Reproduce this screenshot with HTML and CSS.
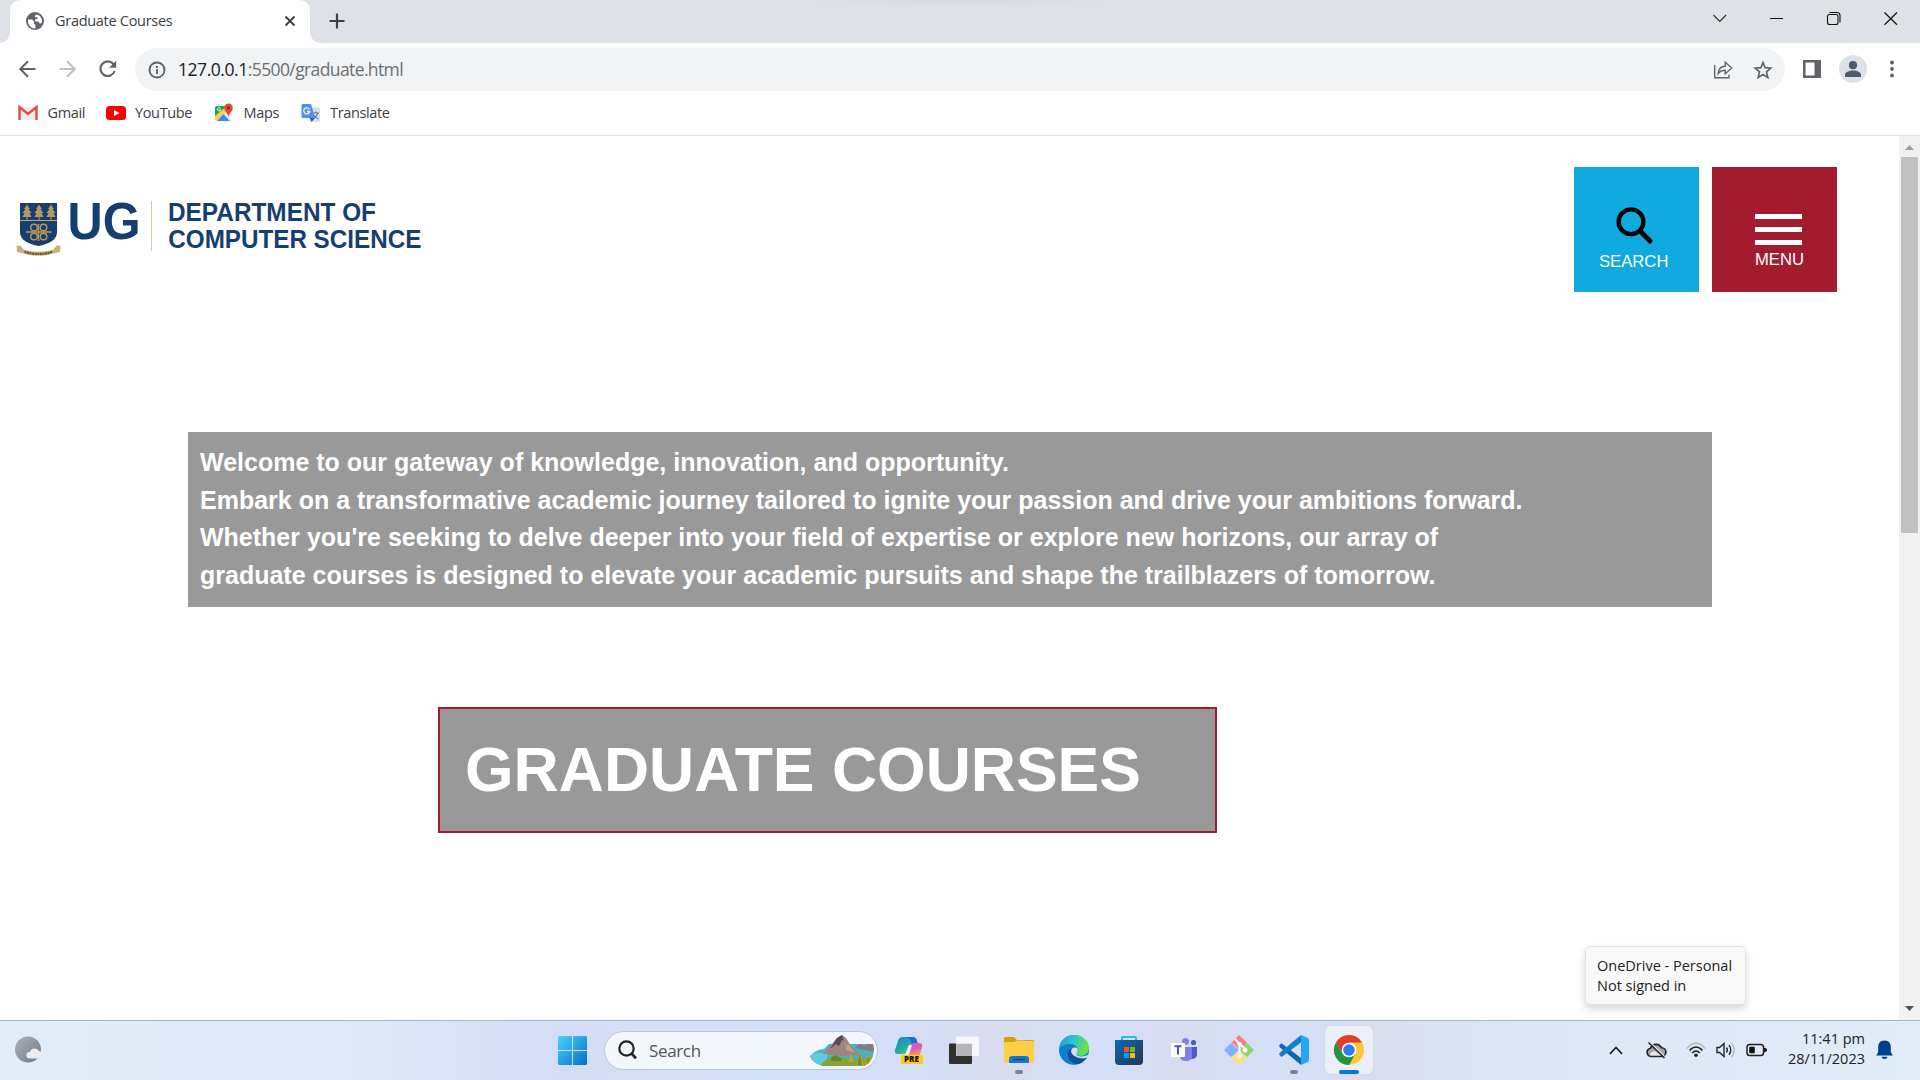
FILE: index.html
```html
<!DOCTYPE html>
<html lang="en">
<head>
<meta charset="utf-8">
<title>Graduate Courses</title>
<link rel="stylesheet" href="styles.css">
</head>
<body>
<div class="tabstrip">
  <div class="tab">
    <svg class="favicon" width="18" height="18" viewBox="0 0 18 18"><circle cx="9" cy="9" r="9" fill="#5f6368"/><path d="M2 7.5h4.2l2 2.2-.4 1.8 1.6 1.4v3.6C5 16.500 2 13 2 9zM9 3.200l2.300-.7C14 3.500 16 6 16 9l-.5 2.200-1.900.3-1.200-2-3.400-.2V7.600l2.400-.6.3-1.700H9z" fill="#fff"/></svg>
    <span class="tab-title">Graduate Courses</span>
    <svg class="tab-close" width="12" height="12" viewBox="0 0 12 12"><path d="M1.500 1.500l9 9m0-9l-9 9" stroke="#3c4043" stroke-width="1.900"/></svg>
  </div>
  <svg class="new-tab" width="16" height="16" viewBox="0 0 16 16"><path d="M8 .5v15M.5 8h15" stroke="#3c4043" stroke-width="2.200"/></svg>
  <div class="window-buttons">
    <svg width="57" height="36" viewBox="0 0 57 36"><path d="M22.500 15l6.300 6.500 6.300-6.500" fill="none" stroke="#333" stroke-width="1.200"/></svg>
    <svg width="57" height="36" viewBox="0 0 57 36"><path d="M22 18.500h13" stroke="#111"/></svg>
    <svg width="57" height="36" viewBox="0 0 57 36"><rect x="22.500" y="14.500" width="10.500" height="10" rx="2" fill="none" stroke="#111" stroke-width="1.100"/><path d="M24.500 12.500H32q3 0 3 3V22.500" fill="none" stroke="#111" stroke-width="1.100"/></svg>
    <svg width="57" height="36" viewBox="0 0 57 36"><path d="M22.500 12.500l12.500 12.300m0-12.300L22.500 24.800" stroke="#111" stroke-width="1.200"/></svg>
  </div>
</div>
<div class="toolbar">
  <svg width="40" height="40" viewBox="0 0 40 40"><path d="M28.500 20H13.500M21 12.300L13.300 20l7.700 7.700" fill="none" stroke="#5f6368" stroke-width="2"/></svg>
  <svg width="40" height="40" viewBox="0 0 40 40"><path d="M12.500 20h15M20 12.300l7.700 7.700-7.700 7.700" fill="none" stroke="#bdc0c4" stroke-width="2"/></svg>
  <svg width="40" height="40" viewBox="0 0 40 40"><path d="M26.800 15.600A7.300 7.300 0 1 0 27.700 22" fill="none" stroke="#5f6368" stroke-width="2.100"/><path d="M29.200 11.700v7h-7z" fill="#5f6368"/></svg>
  <div class="omnibox">
    <svg width="18" height="18" viewBox="0 0 18 18"><circle cx="9" cy="9" r="7.500" fill="none" stroke="#5f6368" stroke-width="1.900"/><path d="M9 8v5M9 5v1.900" stroke="#5f6368" stroke-width="1.900"/></svg>
    <span class="url"><b>127.0.0.1</b>:5500/graduate.html</span>
    <svg class="share" width="20" height="20" viewBox="0 0 20 20" fill="none" stroke="#5f6368" stroke-width="1.400"><path d="M1.700 5v12.800h14.300v-3"/><path d="M5.200 13.500c.3-4.300 3-7.200 7-7.300V2.300L18.700 8l-6.500 5.700v-3.500c-3.200-.1-5.200.9-7 3.300z"/></svg>
    <svg class="star" width="20" height="20" viewBox="0 0 20 20"><path d="M10 2.500l2.100 5.200 5.700.5-4.300 3.700 1.300 5.500L10 14.500l-4.800 2.900 1.300-5.500-4.300-3.700 5.700-.5z" fill="none" stroke="#5f6368" stroke-width="1.700"/></svg>
  </div>
  <svg class="panel" width="18" height="18" viewBox="0 0 18 18"><path fill-rule="evenodd" d="M0 0h18v18H0zM2.500 2.500v13H11.500v-13z" fill="#5f6368"/></svg>
  <svg class="avatar" width="28" height="28" viewBox="0 0 28 28"><circle cx="14" cy="14" r="14" fill="#dee1e6"/><circle cx="14" cy="10.200" r="4.100" fill="#4d5b70"/><path d="M6 22v-2c0-3 4-4.500 8-4.500s8 1.500 8 4.500v2z" fill="#4d5b70"/></svg>
  <svg class="dots" width="6" height="18" viewBox="0 0 6 18" fill="#5f6368"><circle cx="3" cy="2.500" r="1.900"/><circle cx="3" cy="9" r="1.900"/><circle cx="3" cy="15.500" r="1.900"/></svg>
</div>
<div class="bookmarks">
  <svg width="20" height="20" viewBox="0 0 20 20"><path d="M3 4h14v13H3z" fill="#eee"/><path d="M1.500 17V4L10 11l8.500-7v13" fill="none" stroke="#dd4b3e" stroke-width="2.400"/></svg>
  <span class="bm-gmail">Gmail</span>
  <svg width="20" height="20" viewBox="0 0 20 20"><rect y="3" width="20" height="14" rx="3.500" fill="#f00"/><path d="M8 7l5.500 3L8 13z" fill="#fff"/></svg>
  <span class="bm-youtube">YouTube</span>
  <svg width="20" height="20" viewBox="0 0 20 20"><path d="M3 3h14v15H3q-2 0-2-2V5q0-2 2-2z" fill="#f1f1f1"/><path d="M3 3h10L1 14V5q0-2 2-2z" fill="#1e9e57"/><path d="M1 13L12 4l2 3L3 18q-2 0-2-2z" fill="#fcd24a"/><path d="M3 18l6.500-7L16 18z" fill="#4285f4"/><path d="M6.500 5.300a1.700 1.700 0 1 0 .3 1.500H5.300" fill="none" stroke="#fff" stroke-width=".9"/><path d="M14.500 14c-.5-4-4.300-5.500-4.300-9.300a4.300 4.300 0 0 1 8.600 0c0 3.800-3.800 5.300-4.300 9.300z" fill="#e04a3a"/><circle cx="14.500" cy="4.700" r="1.500" fill="#8c211a"/></svg>
  <span class="bm-maps">Maps</span>
  <svg width="20" height="20" viewBox="0 0 20 20"><rect x="8" y="4.500" width="11" height="14.500" rx="1.500" fill="#dcdfe2"/><path d="M12 10h6M15 8.500V10M17 10c-1 3-3 4.500-4.500 5.500M13 12c1 2 2 3.500 4.500 4" stroke="#68777d" stroke-width="1.100" fill="none"/><path d="M2 1h8l4 14H2q-1.500 0-1.500-1.500v-11Q.5 1 2 1z" fill="#4c8df6"/><path d="M9 15h5l-3.500 4z" fill="#2b56c5"/><path d="M8.300 6.300A3 3 0 1 0 8.700 8.500H6" fill="none" stroke="#fff" stroke-width="1.300"/></svg>
  <span class="bm-translate">Translate</span>
</div>
<div class="viewport">
  <main class="page">
    <header class="site-header">
      <svg class="logo" width="440" height="90" viewBox="0 180 440 90">
        <path d="M20 203h37v29c0 8-8 12-18.500 14C28 244 20 240 20 232z" fill="#173e70"/>
        <path d="M20 220.500h37" stroke="#c4a468" stroke-width="1"/>
        <g fill="#b9985a"><path id="tree" d="M27 204.500l3 4.500h-1.500l3 4h-2l2 4h-4v3h-1v-3h-4l2-4h-2l3-4H24z"/><use href="#tree" x="12"/><use href="#tree" x="24"/></g>
        <g fill="none" stroke="#b9985a" stroke-width="1.400"><path d="M26 232h25.500M38.500 224v17"/><circle cx="34" cy="227.500" r="3.300"/><circle cx="43.500" cy="227.500" r="3.300"/><circle cx="34" cy="236.500" r="3.300"/><circle cx="43.500" cy="236.500" r="3.300"/></g>
        <path d="M16.500 246l4-.5 3 4c9 3 21 3 30 0l3-4 4 .5-.5 6-7 1.500c-8 3-21 3-29 0l-7-1.500z" fill="#ccb176"/>
        <path d="M24.500 251.700c8 3 20 3 28 0" fill="none" stroke="#66583a" stroke-width="2.300" stroke-dasharray="2 .6"/>
        <text class="logo-text" x="67.500" y="239.300" font-size="52" textLength="73" lengthAdjust="spacingAndGlyphs">UG</text>
        <path d="M151.500 201v50" stroke="#d9c9a5"/>
        <text class="logo-text" x="168" y="221.200" font-size="25.500" textLength="208" lengthAdjust="spacingAndGlyphs">DEPARTMENT OF</text>
        <text class="logo-text" x="168.300" y="247.500" font-size="25.500" textLength="253" lengthAdjust="spacingAndGlyphs">COMPUTER SCIENCE</text>
      </svg>
      <div class="tile tile-search">
        <svg width="37" height="37" viewBox="0 0 37 37" fill="none" stroke="#000"><circle cx="15" cy="14.700" r="12.400" stroke-width="4.300"/><path d="M24 24l10 10" stroke-width="5" stroke-linecap="round"/></svg>
        <span>SEARCH</span>
      </div>
      <div class="tile tile-menu">
        <div class="bars"><i></i><i></i><i></i></div>
        <span>MENU</span>
      </div>
    </header>
    <p class="intro">Welcome to our gateway of knowledge, innovation, and opportunity.<br>Embark on a transformative academic journey tailored to ignite your passion and drive your ambitions forward.<br>Whether you're seeking to delve deeper into your field of expertise or explore new horizons, our array of<br>graduate courses is designed to elevate your academic pursuits and shape the trailblazers of tomorrow.</p>
    <h1 class="heading">GRADUATE COURSES</h1>
  </main>
  <div class="scrollbar">
    <svg width="21" height="21" viewBox="0 0 21 21"><path d="M6 14l4.500-5 4.500 5z" fill="#a0a0a0"/></svg>
    <div class="thumb"></div>
    <svg width="21" height="21" viewBox="0 0 21 21"><path d="M6 7l4.500 5L15 7z" fill="#505050"/></svg>
  </div>
</div>
<div class="tooltip">OneDrive - Personal<br>Not signed in</div>
<div class="taskbar">
  <svg class="weather" width="30" height="28" viewBox="0 0 30 28"><defs><linearGradient id="moon" x2="1" y2="1"><stop stop-color="#aab2bb"/><stop offset="1" stop-color="#727a84"/></linearGradient></defs><circle cx="13" cy="13.500" r="13" fill="url(#moon)"/><path d="M14.500 22.500a3.300 3.300 0 0 1 .3-6.600 5.200 5.200 0 0 1 9.400-.7 3.700 3.700 0 0 1 .6 7.300z" fill="#e9ebee"/></svg>
  <svg class="start" width="29" height="29" viewBox="0 0 29 29"><defs><linearGradient id="win" x2="1" y2="1"><stop stop-color="#4fd0fb"/><stop offset="1" stop-color="#0070d0"/></linearGradient></defs><path d="M1 0h13v14H0V1zM15 0h13l1 1v13H15zM0 15h14v14H1l-1-1zM15 15h14v13l-1 1H15z" fill="url(#win)"/></svg>
  <div class="search-pill">
    <svg width="19" height="20" viewBox="0 0 19 20" fill="none" stroke="#222" stroke-width="2.200"><circle cx="8.500" cy="8.500" r="7.200"/><path d="M13.500 13.500l4.500 4.800" stroke-width="2.600"/></svg>
    <span>Search</span>
    <svg class="scene" width="64" height="31" viewBox="0 0 64 31"><defs><clipPath id="sc"><path d="M0 21Q5 15 14 14L28 0h8l9 9h18l1 5Q64 26 54 31H14Q3 29 0 21z"/></clipPath></defs><g clip-path="url(#sc)"><path d="M0 9h64v22H0z" fill="#45b3c6"/><path d="M44 13l6-4 5 2 4-4 6 4v6z" fill="#8d7782"/><path d="M13 19L22 9l5-6 5-3 4 3 5 8 9 9-18 1z" fill="#a18283"/><path d="M27 3l5-3 2 6-2-1-3 6-3-2-6 5z" fill="#5b4858"/><path d="M34 3l2 9 2-3 7 9-9-3z" fill="#c6a08e"/><path d="M0 20q8-5 18 0l-4 12H0z" fill="#5fcbdb"/><path d="M10 31q5-8 16-9 12 1 17 3l21-4v10z" fill="#89a13a"/><path d="M21 23q4-5 8-1 4 1 2 4H21z" fill="#5b8c2a"/><path d="M41 19l3 8h-6zM50 17l4 13h-8zM59 18l4 12h-8z" fill="#c0a52c"/><path d="M50 18l2 12h-5zM59 19l1 11h-4z" fill="#7f8a25"/></g></svg>
  </div>
  <div class="apps">
    <div class="app"><svg width="30" height="30" viewBox="0 0 30 30"><defs><linearGradient id="cp1" y2="1"><stop stop-color="#2377dc"/><stop offset=".5" stop-color="#1fae9b"/><stop offset="1" stop-color="#a8d64c"/></linearGradient><linearGradient id="cp2" x2=".4" y2="1"><stop stop-color="#9270e8"/><stop offset=".6" stop-color="#e458b3"/><stop offset="1" stop-color="#f49366"/></linearGradient></defs><path d="M9 2h10q3 0 4 4l1 3h-6q-3 0-4 4l-2 6H4q-4 0-3-4L4 6q1-4 5-4z" fill="url(#cp1)"/><path d="M12 2h7q3 0 4 4l.5 2h-6Q16 3 12 2z" fill="#2368d8"/><path d="M18 8h7q4 0 3 4l-2 8H13l3-10q.5-2 2-2z" fill="url(#cp2)"/><path d="M15 10h3l-3 10h-4z" fill="#f4e8f8"/><rect x="7" y="20" width="22" height="9" rx="2" fill="#ffc814"/><text x="10" y="27.300" class="pre">PRE</text></svg></div>
    <div class="app"><svg width="30" height="30" viewBox="0 0 30 30"><rect y="8.500" width="23" height="20.500" rx="1" fill="#30302f"/><rect x="7" y="1.500" width="23" height="19.500" rx="1" fill="#fff" opacity=".78"/><path d="M7.500 9H23v12H7.500z" fill="#aaa" opacity=".7"/></svg></div>
    <div class="app running"><svg width="30" height="30" viewBox="0 0 30 30"><path d="M0 3.500Q0 2 1.500 2H10l3 3h15.500Q30 5 30 7v8H0z" fill="#db9b0d"/><path d="M0 9q0-2 2-2h8l3-1.500 15.500.5Q30 6 30 8v18.500q0 1.500-1.500 1.500h-27Q0 28 0 26.500z" fill="#ffce47"/><path d="M5 28v-4q0-3 3-3h14q3 0 3 3v4z" fill="#147ad0"/><path d="M9 24.500h12" stroke="#08478b" stroke-width="1.400"/></svg></div>
    <div class="app"><svg width="30" height="30" viewBox="0 0 30 30"><defs><linearGradient id="eg" x2="1" y2=".3"><stop stop-color="#1b98d8"/><stop offset=".5" stop-color="#2cc4cf"/><stop offset="1" stop-color="#6be346"/></linearGradient></defs><circle cx="15" cy="15" r="15" fill="#0c7fd3"/><path d="M0 14C1 5 7 0 15 0c9 0 15 6 15 13 0 5-4 8-8 8-3 0-5-1-4.500-2.500C20 16 19 9 11 9 6 9 2 11 0 14z" fill="url(#eg)"/><path d="M10 15c-3 7 1 14 9 14 4-1 7-4 9-7-4 2-8 2-11 0-3-1.500-4-4-3-7-1-1-3-1-4 0z" fill="#0f4f98"/><path d="M12 17c0-3 2-5 4.500-4.500 2.500.5 3 4 1 6-1 2 2 3 5 3 3-.2 6-1 7.500-2.500l-1 3c-3 1.500-7 1.700-10 .500-4-1-6-3-7-5.500z" fill="#d7def3"/></svg></div>
    <div class="app"><svg width="30" height="30" viewBox="0 0 30 30"><defs><linearGradient id="st" y2="1"><stop stop-color="#0b6bb5"/><stop offset="1" stop-color="#243553"/></linearGradient></defs><path d="M8 6V2.500Q8 2 9 2h12q1 0 1 .8V6" fill="none" stroke="#24b9ee" stroke-width="2"/><path d="M1 5h28v21q0 4-4 4H5q-4 0-4-4z" fill="url(#st)"/><path d="M10 12h5v5h-5z" fill="#f25022"/><path d="M16 12h5v5h-5z" fill="#7fba00"/><path d="M10 18h5v5h-5z" fill="#00a4ef"/><path d="M16 18h5v5h-5z" fill="#ffb900"/></svg></div>
    <div class="app"><svg width="30" height="30" viewBox="0 0 30 30"><circle cx="16.500" cy="6.500" r="3.500" fill="#7b83eb"/><circle cx="24.500" cy="7.500" r="2.600" fill="#5059c9"/><path d="M18 12h10v8q-1 4-5 4h-5z" fill="#5059c9"/><path d="M11 12h12v9q0 5-6 5t-6-5z" fill="#7b83eb"/><rect x="2" y="8" width="14" height="14" rx="1" fill="#fff"/><path d="M5.500 11.200h7M9 11v8.500" stroke="#4b53bc" stroke-width="2"/></svg></div>
    <div class="app"><svg width="30" height="30" viewBox="0 0 30 30"><path d="M15 0l8 7.500-7.500 7L7.500 7.500z" fill="#fb7c7c"/><path d="M7 8l8 7-8 7-7-7z" fill="#80b2fb"/><path d="M23 8l7 7-7 7-8-7z" fill="#8dd665"/><path d="M15 15.500l8 7-8 7.500-8-7.500z" fill="#fbe27c"/><path d="M11 4l4.500 5v12M16 9l5 5" stroke="#f1f1f6" stroke-width="2.200" fill="none"/><g fill="#f1f1f6"><circle cx="15.500" cy="9" r="2.300"/><circle cx="21" cy="15" r="2.500"/><circle cx="15.500" cy="21" r="2.500"/></g></svg></div>
    <div class="app running"><svg width="30" height="30" viewBox="0 0 30 30"><path d="M0 10.500l2.500-2.200L22 23v7L1 12.500z" fill="#0b68ac"/><path d="M0 19.500L2.500 22 22 7.500V0L1 17.500z" fill="#1080c8"/><path d="M22 0l7 3 1 2v20l-1 2-7 3z" fill="#2aa5f3"/></svg></div>
    <div class="app active"><svg width="30" height="30" viewBox="0 0 30 30"><circle cx="15" cy="15" r="15" fill="#fcc934"/><path d="M2 7.500A15 15 0 0 1 28 7.500H15L8.500 18.700z" fill="#e33b2e"/><path d="M2 7.500A15 15 0 0 0 15 30l6.500-11.200L8.500 18.700z" fill="#229342"/><circle cx="15" cy="15" r="7.300" fill="#fff"/><circle cx="15" cy="15" r="5.800" fill="#2f7cec"/></svg></div>
  </div>
  <div class="tray">
    <svg width="14" height="9" viewBox="0 0 14 9"><path d="M1 7.800L7 1.500l6 6.300" fill="none" stroke="#222" stroke-width="1.700"/></svg>
    <svg class="cloud" width="20" height="17" viewBox="0 0 20 17"><path d="M5 14.500a4.200 4.200 0 0 1-.5-8.300 6 6 0 0 1 11-.5 4.400 4.400 0 0 1 0 8.800z" fill="#a5a5a5" stroke="#222" stroke-width="1.600"/><path d="M4 13.500q1-5 6-4l6 4z" fill="#e6e6e6"/><path d="M3.500 0l15 14.500" stroke="#e7eef8" stroke-width="1.500"/><path d="M2.500 .5L18.500 16" stroke="#222" stroke-width="1.500"/></svg>
    <svg class="wifi" width="20" height="16" viewBox="0 0 20 16" fill="none"><path d="M.8 6.500Q10-4 19.200 6.500" stroke="#b0b9c2" stroke-width="1.400"/><path d="M3.500 8.500q6.500-7 13 0M6.200 11q3.800-4 7.600 0" stroke="#222" stroke-width="1.500"/><circle cx="10" cy="13.300" r="1.800" fill="#222"/></svg>
    <svg class="sound" width="20" height="16" viewBox="0 0 20 16" fill="none" stroke="#222" stroke-width="1.400"><path d="M1 5.500h2.500L8 1.500v13L3.500 10.500H1zM10.500 5.500q1.700 2.500 0 5M13 3.200q3.500 4.800 0 9.600"/><path d="M15.500 1q5.500 7 0 14" stroke="#b0b9c2"/></svg>
    <svg class="battery" width="21" height="14" viewBox="0 0 21 14"><rect x="1" y="1.500" width="16.500" height="11" rx="2.800" fill="none" stroke="#222" stroke-width="1.500"/><rect x="3.200" y="3.700" width="5.600" height="6.600" rx="1" fill="#111"/><path d="M18.500 5l2 1v2l-2 1z" fill="#222" stroke="#222"/></svg>
    <div class="clock">11:41 pm<br>28/11/2023</div>
    <svg class="bell" width="17" height="20" viewBox="0 0 17 20"><path d="M8.500.5c4 0 6.300 2.800 6.300 6.500v5l2 3.500H.2l2-3.500V7C2.200 3.300 4.500.500 8.500.5zM5.500 16.700h6c-.5 3-5.500 3-6 0z" fill="#003e92"/></svg>
  </div>
</div>
</body>
</html>
```
FILE: styles.css
```css
* { box-sizing: border-box; }
body { margin: 0; width: 1920px; height: 1080px; overflow: hidden; display: flex; flex-direction: column; background: #fff; font-family: "Open Sans", "Noto Sans", sans-serif; color: #3c4043; }
svg { display: block; flex: none; overflow: visible; }
span { white-space: nowrap; flex: none; }

.tabstrip { height: 43px; flex: none; display: flex; align-items: flex-start; background: radial-gradient(ellipse 150px 6px at 960px 0, #d6d9dd, #dee1e6); }
.tab { position: relative; width: 300px; height: 43px; margin-left: 10px; padding: 0 14px 2px 16px; display: flex; align-items: center; background: #fff; border-radius: 10px 10px 0 0; }
.tab::before, .tab::after { content: ""; position: absolute; bottom: 0; width: 10px; height: 10px; }
.tab::before { left: -10px; background: radial-gradient(circle at 0 0, transparent 9.5px, #fff 10px); }
.tab::after { right: -10px; background: radial-gradient(circle at 100% 0, transparent 9.5px, #fff 10px); }
.tab-title { margin-left: 11px; font-size: 14.5px; letter-spacing: -0.29px; }
.tab-close { margin-left: auto; }
.new-tab { margin: 13px 0 0 19px; }
.window-buttons { margin-left: auto; padding-right: 1px; display: flex; }

.toolbar { height: 52px; flex: none; display: flex; align-items: center; padding-left: 7px; }
.omnibox { width: 1650px; height: 43px; margin: 1px 0 0 8px; padding: 0 12px 0 13px; display: flex; align-items: center; background: #f1f3f4; border-radius: 22px; }
.url { margin: -2px 0 0 12px; font-size: 17.500px; letter-spacing: -0.61px; color: #6b6f74; }
.url b { font-weight: 400; color: #202124; letter-spacing: -0.45px; }
.share { margin-left: auto; }
.star { margin-left: 20px; }
.panel { margin-left: 18px; }
.avatar { margin-left: 18px; }
.dots { margin-left: 22px; }

.bookmarks { height: 41px; flex: none; display: flex; align-items: center; padding: 0 0 5px 18px; border-bottom: 1px solid #dadce0; font-size: 14.500px; letter-spacing: -0.36px; }
.bookmarks span { margin-left: 9.500px; }
.bm-gmail { width: 58px; }
.bm-youtube { width: 79px; }
.bm-maps { width: 57px; }

.viewport { height: 884px; flex: none; display: flex; }
.page { width: 1899px; display: flex; flex-direction: column; font-family: "Liberation Sans", Arial, sans-serif; color: #fff; }
.site-header { height: 156px; display: flex; align-items: flex-start; }
.logo { margin: 44px auto 0 0; }
.logo-text { font-family: "Liberation Sans", Arial, sans-serif; font-weight: 700; fill: #173e70; }
.tile { width: 125px; height: 125px; margin-top: 31px; display: flex; flex-direction: column; font-size: 16.670px; line-height: 19px; }
.tile-search { background: #10aadf; margin-right: 13px; padding: 40px 0 0 25px; }
.tile-search svg { margin-left: 17px; }
.tile-search span { margin-top: 8px; }
.tile-menu { background: #a31b2f; margin-right: 62px; padding: 47px 0 0 43px; }
.bars { width: 47px; height: 31px; display: flex; flex-direction: column; justify-content: space-between; }
.bars i { height: 5px; background: #fff; }
.tile-menu span { margin-top: 5px; }
.intro { width: 1524px; height: 175px; margin: 140px 0 0 188px; padding: 12px; background: #999; font-size: 25px; font-weight: 700; line-height: 37.500px; white-space: nowrap; }
.heading { width: 779px; height: 126px; margin: 100px 0 0 438px; padding: 24px 25px; border: 2px solid #a31b2f; background: #999; font-size: 62.500px; line-height: 72px; white-space: nowrap; }

.scrollbar { width: 21px; height: 884px; background: #f1f1f1; display: flex; flex-direction: column; }
.thumb { width: 17px; height: 376px; margin: 0 auto auto 2px; background: #c1c1c1; }

.tooltip { position: absolute; left: 1585px; top: 946px; width: 161px; height: 59px; padding: 9px 11px; background: #f9f9f9; border: 1px solid #e3e3e3; border-radius: 5px; box-shadow: 0 4px 8px rgba(0,0,0,.16); font-size: 14.500px; line-height: 20px; letter-spacing: 0; color: #222; white-space: nowrap; }

.taskbar { height: 60px; flex: none; display: flex; align-items: center; padding-bottom: 1px; border-top: 1px solid #a9b2c0; background: linear-gradient(90deg, #e0ecf8 0, #dfebf8 340px, #d4ddf6 560px, #d6def4 660px, #cfe1f9 760px, #d4def7 900px, #d8dcee 1000px, #d5dff8 1100px, #d8dcee 1180px, #d3e0f8 1270px, #d9deef 1370px, #dde8f7 1550px, #e0ecf8 1920px); }
.weather { margin-left: 15px; }
.start { margin-left: 513px; }
.search-pill { width: 274px; height: 39px; margin-left: 17px; padding: 0 3px 0 13px; display: flex; align-items: center; border: 1px solid #bac5dd; border-radius: 20px; background: #f2f6fd; }
.search-pill span { margin-left: 12px; font-size: 17px; letter-spacing: -0.35px; color: #555; }
.scene { margin-left: auto; }
.pre { font-family: "Open Sans", sans-serif; font-weight: 800; font-size: 8px; fill: #111; }
.apps { display: flex; gap: 7px; margin-left: 7px; }
.app { position: relative; width: 48px; height: 48px; display: flex; align-items: center; justify-content: center; border-radius: 5px; }
.active { background: #ebeff8; box-shadow: 0 0 1px #aab; }
.running::after, .active::after { content: ""; position: absolute; bottom: 0; left: 20px; width: 8px; height: 4px; border-radius: 2px; background: #7c828c; }
.active::after { left: 14px; width: 20px; background: #0078d4; }
.tray { margin-left: auto; display: flex; align-items: center; padding-right: 27px; }
.cloud { margin-left: 23px; }
.wifi { margin-left: 20px; }
.sound { margin-left: 10px; }
.battery { margin-left: 10px; }
.clock { width: 98px; margin-top: -2px; text-align: right; font-size: 14.500px; line-height: 20px; letter-spacing: 0; color: #222; }
.bell { margin-left: 11px; }
```
